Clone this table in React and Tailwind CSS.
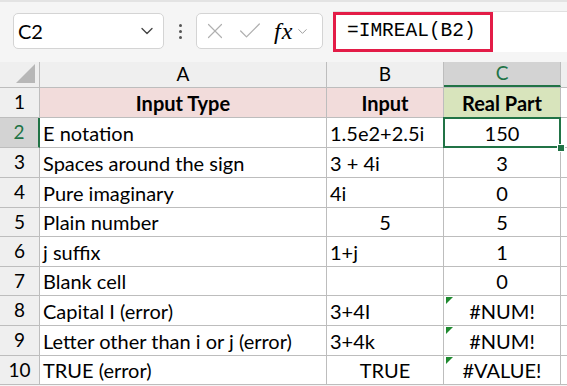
import { X, Check, ChevronDown } from 'lucide-react';

const rows = [
  { n: 1, a: 'Input Type', b: 'Input', c: 'Real Part', head: true, h: 'h-[30px]' },
  { n: 2, a: 'E notation', b: '1.5e2+2.5i', c: '150', h: 'h-[30px]' },
  { n: 3, a: 'Spaces around the sign', b: '3 + 4i', c: '3', h: 'h-[30px]' },
  { n: 4, a: 'Pure imaginary', b: '4i', c: '0', h: 'h-[30px]' },
  { n: 5, a: 'Plain number', b: '5', c: '5', bCenter: true, h: 'h-[29px]' },
  { n: 6, a: 'j suffix', b: '1+j', c: '1', h: 'h-[30px]' },
  { n: 7, a: 'Blank cell', b: '', c: '0', h: 'h-[29px]' },
  { n: 8, a: 'Capital I (error)', b: '3+4I', c: '#NUM!', err: true, h: 'h-[30px]' },
  { n: 9, a: 'Letter other than i or j (error)', b: '3+4k', c: '#NUM!', err: true, h: 'h-[30px]' },
  { n: 10, a: 'TRUE (error)', b: 'TRUE', c: '#VALUE!', err: true, bCenter: true, h: 'h-[29px]' },
];

const font = { fontFamily: 'Lato, "Open Sans", sans-serif' };

const App = () => {
  return (
    <div className="w-[567px] h-[386px] overflow-hidden bg-[#f5f5f5] text-black" style={font}>
      {/* formula toolbar */}
      <div className="h-[62px] border-t-2 border-[#e3e3e3] flex items-start pl-[13px] pt-[11px]">
        <div className="w-[151px] h-[36px] bg-white border border-[#d4d4d4] rounded-[5px] flex items-center justify-between pl-[4px] pr-[6px]">
          <span className="text-[20px] leading-none">C2</span>
          <ChevronDown className="w-[20px] h-[20px] text-[#444]" strokeWidth={1.6} />
        </div>
        <div className="w-[32px] h-[36px] flex flex-col items-center justify-center gap-[3px]">
          <span className="w-[3px] h-[3px] bg-[#555] rounded-full" />
          <span className="w-[3px] h-[3px] bg-[#555] rounded-full" />
          <span className="w-[3px] h-[3px] bg-[#555] rounded-full" />
        </div>
        <div className="w-[127px] h-[36px] bg-white border border-[#d4d4d4] rounded-[5px] flex items-center pl-[5px] gap-[8px]">
          <X className="w-[26px] h-[26px] text-[#b0b0b0]" strokeWidth={1.1} />
          <Check className="w-[28px] h-[28px] text-[#b0b0b0]" strokeWidth={1.1} />
          <span className="flex items-center gap-[2px] ml-[2px]">
            <span className="text-[24px] italic leading-none tracking-[1px]" style={{ fontFamily: '"Liberation Serif", serif' }}>fx</span>
            <ChevronDown className="w-[15px] h-[15px] text-[#999]" strokeWidth={1.5} />
          </span>
        </div>
        <div className="ml-[10px] -mt-[2px] flex-1 h-[41px] bg-white border-t border-[#e0e0e0] flex items-stretch">
          <div className="w-[160px] border-[3px] border-[#e31c47] flex items-center pl-[11px]">
            <span className="text-[19.5px] leading-none" style={{ fontFamily: '"Liberation Mono", monospace' }}>=IMREAL(B2)</span>
          </div>
        </div>
      </div>

      {/* column headers */}
      <div className="flex h-[26px] text-[19px] border-b border-[#bdbdbd]">
        <div className="w-[40px] shrink-0 bg-[#efefef] border-r border-[#bdbdbd] relative">
          <svg className="absolute right-[4px] bottom-[4px]" width="19" height="19" viewBox="0 0 19 19">
            <polygon points="19,0 19,19 0,19" fill="#b7b7b7" />
          </svg>
        </div>
        <div className="w-[287px] shrink-0 bg-[#efefef] border-r border-[#bdbdbd] flex items-center justify-center">A</div>
        <div className="w-[117px] shrink-0 bg-[#efefef] border-r border-[#bdbdbd] flex items-center justify-center">B</div>
        <div className="w-[117px] shrink-0 bg-[#d3d3d3] border-r border-[#bdbdbd] border-b-2 border-b-[#217346] flex items-center justify-center text-[#217346]">C</div>
        <div className="flex-1 bg-[#efefef]" />
      </div>

      {/* rows */}
      {rows.map((r) => (
        <div key={r.n} className={`flex ${r.h} text-[20px] bg-white`}>
          <div
            className={`w-[40px] shrink-0 border-b flex items-center justify-center text-[19px] ${
              r.n === 2
                ? 'bg-[#d3d3d3] text-[#217346] border-[#bdbdbd] border-r-2 border-r-[#217346]'
                : 'bg-[#efefef] border-[#bdbdbd] border-r border-r-[#bdbdbd]'
            }`}
          >
            {r.n}
          </div>
          <div
            className={`w-[287px] shrink-0 border-r border-b border-[#bdbdbd] flex items-center ${
              r.head ? 'bg-[#f2dcdb] justify-center font-bold' : 'pl-[3px]'
            }`}
          >
            {r.a}
          </div>
          <div
            className={`w-[117px] shrink-0 border-r border-b border-[#bdbdbd] flex items-center ${
              r.head ? 'bg-[#f2dcdb] justify-center font-bold' : r.bCenter ? 'justify-center' : 'pl-[3px]'
            }`}
          >
            {r.b}
          </div>
          <div
            className={`relative w-[117px] shrink-0 border-r border-b border-[#bdbdbd] flex items-center justify-center ${
              r.head ? 'bg-[#d8e4bc] font-bold' : ''
            }`}
          >
            {r.c}
            {r.err && (
              <svg className="absolute left-[2px] top-[1px]" width="7" height="7" viewBox="0 0 7 7">
                <polygon points="0,0 7,0 0,7" fill="#1e8a2f" />
              </svg>
            )}
            {r.n === 2 && (
              <>
                <div className="absolute -left-[1px] -top-[1px] -right-[1px] -bottom-[1px] border-2 border-[#217346]" />
                <div className="absolute z-10 -right-[5px] -bottom-[5px] w-[8px] h-[8px] bg-[#217346] border border-white" />
              </>
            )}
          </div>
          <div className="flex-1 border-b border-[#bdbdbd]" />
        </div>
      ))}
    </div>
  );
};

export default App;
